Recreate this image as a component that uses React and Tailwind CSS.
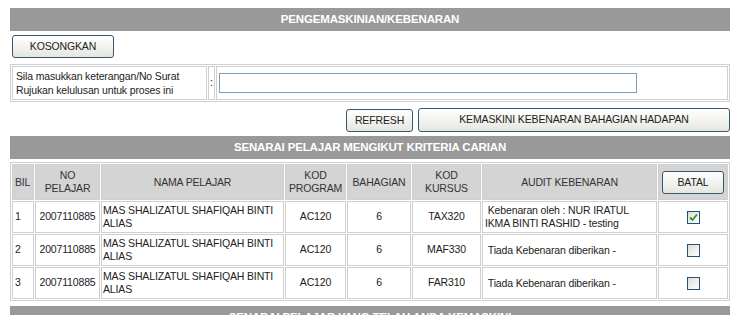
import React from 'react';

const rows = [
  { bil: 1, kursus: 'TAX320', audit: ['\u00a0Kebenaran oleh : NUR IRATUL', 'IKMA BINTI RASHID - testing'], checked: true },
  { bil: 2, kursus: 'MAF330', audit: ['\u00a0Tiada Kebenaran diberikan -'], checked: false },
  { bil: 3, kursus: 'FAR310', audit: ['\u00a0Tiada Kebenaran diberikan -'], checked: false },
];

function Bar({ children }) {
  return (
    <div className="h-[23px] bg-[#999999] text-white font-bold text-[11.5px] flex items-center justify-center">
      {children}
    </div>
  );
}

function Btn({ className = '', children }) {
  return (
    <button className={`border border-[#3b5670] rounded-[3px] bg-gradient-to-b from-white to-[#e6e6e0] text-[10.5px] text-[#222] ${className}`}>
      {children}
    </button>
  );
}

function Check({ checked }) {
  return (
    <div className="w-[13px] h-[13px] mx-auto border border-[#1c5180] bg-gradient-to-br from-[#dcdcd7] to-white flex items-center justify-center">
      {checked && (
        <svg width="9" height="9" viewBox="0 0 9 9">
          <path d="M1 4.5 L3.5 7 L8 1.5" fill="none" stroke="#21a121" strokeWidth="1.8" />
        </svg>
      )}
    </div>
  );
}

export default function App() {
  const cell = 'border border-[#cfcfcf]';
  const th = `${cell} bg-[#d4d4d4] font-normal text-[#333] leading-[13px] p-0`;
  return (
    <div className="w-[740px] h-[315px] overflow-hidden bg-white px-[10px] pt-[8px] text-[10.5px] text-[#222] tracking-[-0.15px]" style={{ fontFamily: '"Liberation Sans", Arial, sans-serif' }}>
      <Bar>PENGEMASKINIAN/KEBENARAN</Bar>

      <Btn className="mt-[4px] ml-[2px] w-[102px] h-[23px]">KOSONGKAN</Btn>

      <table className="mt-[6px] w-full border border-[#cfcfcf] border-separate border-spacing-[1px]">
        <tbody>
          <tr className="h-[34px]">
            <td className={`${cell} w-[195px] px-[3px] leading-[14px]`}>
              Sila masukkan keterangan/No Surat<br />Rujukan kelulusan untuk proses ini
            </td>
            <td className={`${cell} w-[7px] text-center p-0`}>:</td>
            <td className={`${cell} px-[2px]`}>
              <div className="w-[418px] h-[20px] border border-[#7f9db9] bg-white" />
            </td>
          </tr>
        </tbody>
      </table>

      <div className="mt-[6px] flex justify-end gap-[5px]">
        <Btn className="w-[67px] h-[23px] mt-[1px]">REFRESH</Btn>
        <Btn className="w-[312px] h-[24px]">KEMASKINI KEBENARAN BAHAGIAN HADAPAN</Btn>
      </div>

      <div className="mt-[4px]">
        <Bar>SENARAI PELAJAR MENGIKUT KRITERIA CARIAN</Bar>
      </div>

      <table className="mt-[3px] w-full border border-[#cfcfcf] border-separate border-spacing-[1px] table-fixed">
        <colgroup>
          <col className="w-[22px]" />
          <col className="w-[65px]" />
          <col className="w-[183px]" />
          <col className="w-[61px]" />
          <col className="w-[64px]" />
          <col className="w-[69px]" />
          <col className="w-[175px]" />
          <col />
        </colgroup>
        <thead>
          <tr className="h-[36px]">
            <th className={`${th} text-left px-[2px]`}>BIL</th>
            <th className={th}>NO<br />PELAJAR</th>
            <th className={th}>NAMA PELAJAR</th>
            <th className={th}>KOD<br />PROGRAM</th>
            <th className={th}>BAHAGIAN</th>
            <th className={th}>KOD<br />KURSUS</th>
            <th className={th}>AUDIT KEBENARAN</th>
            <th className={th}>
              <Btn className="w-[62px] h-[23px] mt-[1px]">BATAL</Btn>
            </th>
          </tr>
        </thead>
        <tbody>
          {rows.map(r => (
            <tr key={r.bil} className="h-[32px]">
              <td className={`${cell} px-[2px]`}>{r.bil}</td>
              <td className={`${cell} p-0 text-center`}>2007110885</td>
              <td className={`${cell} px-[1px] leading-[13px]`}>MAS SHALIZATUL SHAFIQAH BINTI<br />ALIAS</td>
              <td className={`${cell} text-center`}>AC120</td>
              <td className={`${cell} text-center`}>6</td>
              <td className={`${cell} text-center`}>{r.kursus}</td>
              <td className={`${cell} px-[2px] leading-[13px]`}>
                {r.audit.map((l, i) => <div key={i}>{l}</div>)}
              </td>
              <td className={cell}><Check checked={r.checked} /></td>
            </tr>
          ))}
        </tbody>
      </table>

      <div className="mt-[5px]">
        <Bar>SENARAI PELAJAR YANG TELAH ANDA KEMASKINI</Bar>
      </div>
    </div>
  );
}
